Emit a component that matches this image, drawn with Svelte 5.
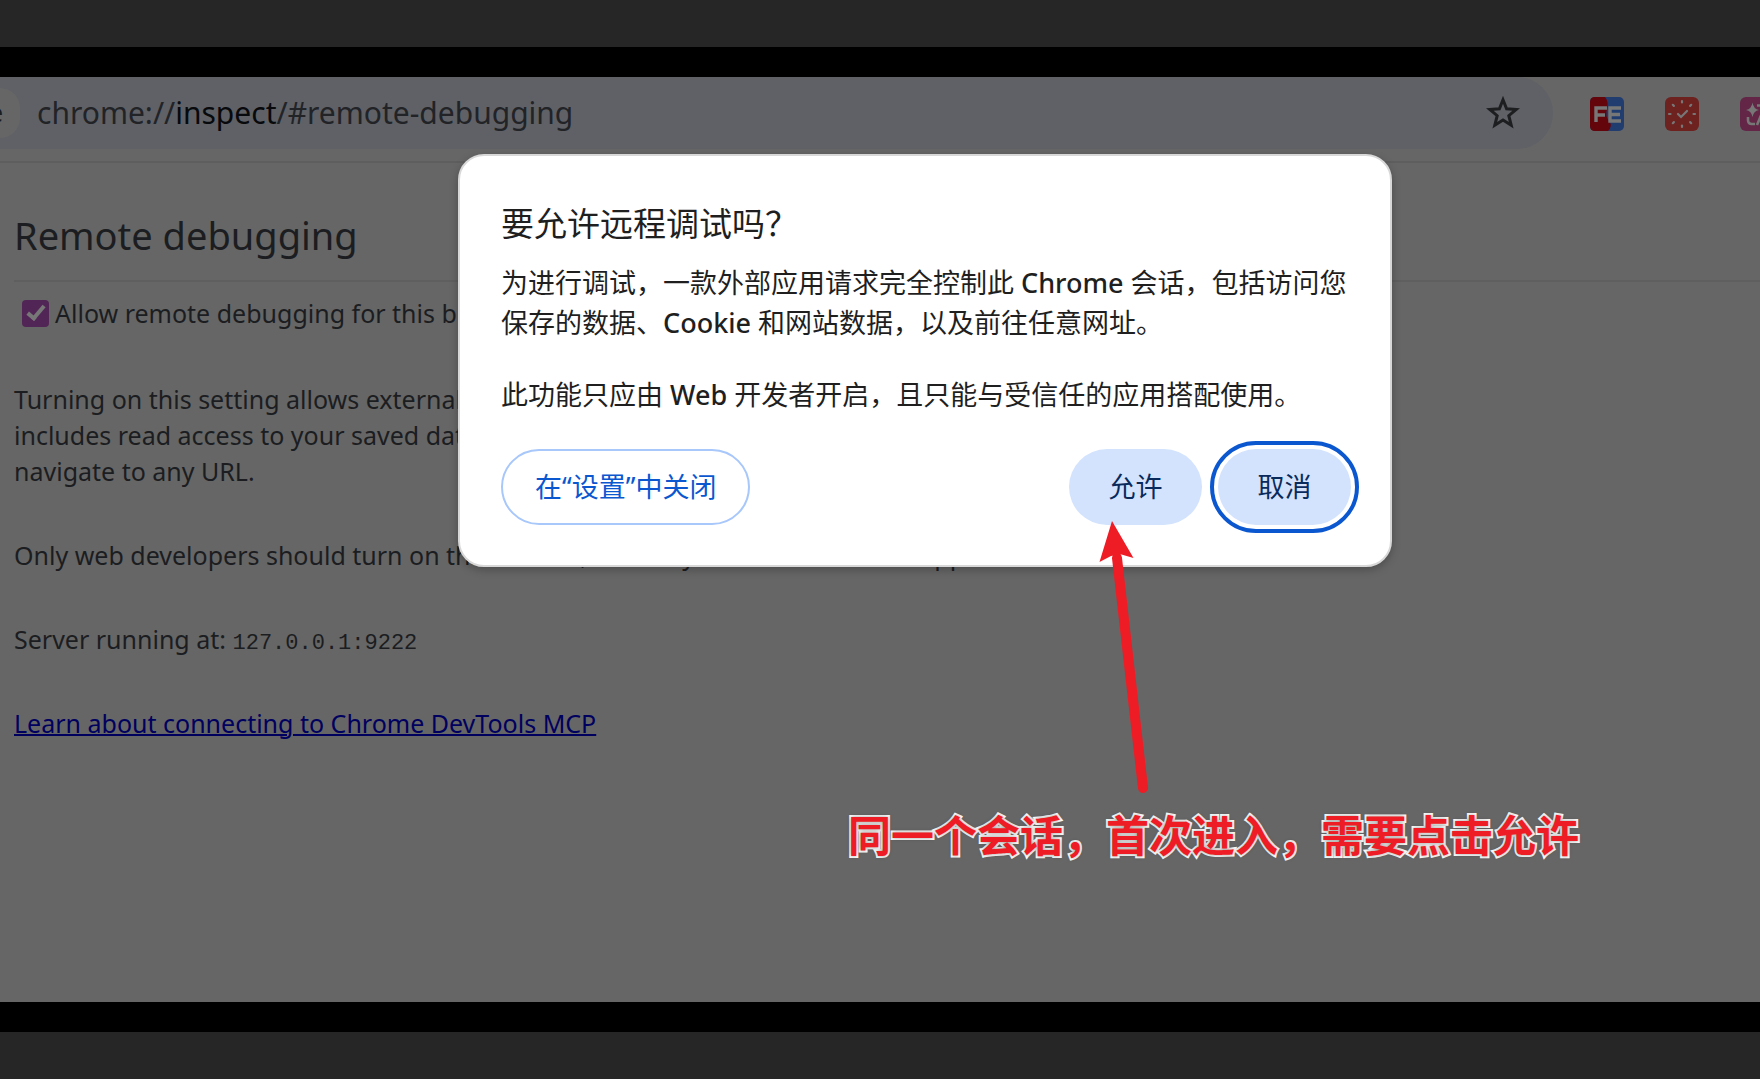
<script>
  let allowDebugging = $state(true);
  const ticks = [0, 45, 90, 135, 180, 225, 270, 315];
</script>

<main class="viewer">
  <section class="window">
    <header class="toolbar">
      <div class="omnibox">
        <span class="chip">e</span>
        <span class="url">chrome://<b>inspect</b>/#remote-debugging</span>
        <button class="icon-button" aria-label="Bookmark this tab">
          <svg class="star" viewBox="0 0 34 34">
            <path d="M17 3.8 20.6 12.8 30.2 13.5 22.8 19.7 25.2 29.2 17 24 8.8 29.2 11.2 19.7 3.8 13.5 13.4 12.8Z" />
          </svg>
        </button>
      </div>
      <nav class="extensions" aria-label="Extensions">
        <button class="icon-button" aria-label="FE helper">
          <svg viewBox="0 0 34 34">
            <rect width="34" height="34" rx="5" fill="#213d70" />
            <path d="M5 0H15Q19 5 17 12T19 24 18 34H5Q0 34 0 29V5Q0 0 5 0Z" fill="#64050c" />
            <path d="M6 25V11H17M6 18H15M31 11H20V24H31M20 17.500H30" fill="none" stroke="#777" stroke-width="3.400" />
          </svg>
        </button>
        <button class="icon-button" aria-label="Clock">
          <svg viewBox="0 0 34 34">
            <rect width="34" height="34" rx="6" fill="#6d2220" />
            <g stroke="#777" stroke-width="2.200" stroke-linecap="round" fill="none">
              {#each ticks as angle}
                <path d="M17 4V5.500" transform="rotate({angle} 17 17)" />
              {/each}
              <path d="M13 17 16 20 22 14" />
            </g>
          </svg>
        </button>
        <button class="icon-button" aria-label="Translate">
          <svg viewBox="0 0 34 34">
            <rect width="34" height="34" rx="6" fill="#632646" />
            <path d="M12.500 5.500Q13.500 12 19 13 13.500 14 12.500 20 11.500 14 6 13 11.500 12 12.500 5.500Z" fill="#777" />
            <path d="M17 8.500H26M8 20V23Q8 27 12 27H15M17 28 22 16 27 28" fill="none" stroke="#777" stroke-width="2.600" />
          </svg>
        </button>
      </nav>
    </header>

    <article class="page">
      <h1>Remote debugging</h1>
      <label class="option">
        <input type="checkbox" bind:checked={allowDebugging} />
        <span>Allow remote debugging for this browser instance</span>
      </label>
      <p>
        Turning on this setting allows external apps to request full control of the browser, which<br />
        includes read access to your saved data, cookies and site data, and the ability to<br />
        navigate to any URL.
      </p>
      <p>Only web developers should turn on this feature, and only use it with trusted apps</p>
      <p>Server running at: <code>127.0.0.1:9222</code></p>
      <p><a href="#mcp">Learn about connecting to Chrome DevTools MCP</a></p>
    </article>

    <div class="dialog" role="dialog" aria-labelledby="dialog-title">
      <h2 id="dialog-title">要允许远程调试吗？</h2>
      <p>为进行调试，一款外部应用请求完全控制此 <span>Chrome</span> 会话，包括访问您保存的数据、<span>Cookie</span> 和网站数据，以及前往任意网址。</p>
      <p>此功能只应由 <span>Web</span> 开发者开启，且只能与受信任的应用搭配使用。</p>
      <div class="actions">
        <button class="pill outline">在“设置”中关闭</button>
        <button class="pill tonal">允许</button>
        <button class="pill tonal focused">取消</button>
      </div>
    </div>

    <svg class="arrow" viewBox="0 0 48 280" aria-hidden="true">
      <path d="M17 37 43 267" stroke="#ee1c25" stroke-width="10" stroke-linecap="round" />
      <path d="M12 0 33.500 37 21.500 33.500 11 35 -0.500 41Z" fill="#ee1c25" />
    </svg>
    <div class="caption">同一个会话，首次进入，需要点击允许</div>
  </section>
</main>

<style>
  :global(body) {
    margin: 0;
    background: #262626;
  }
  .viewer {
    box-sizing: border-box;
    min-height: 100vh;
    padding: 47px 0;
    display: flex;
    flex-direction: column;
    font-family: "Noto Sans", "Noto Sans CJK SC", sans-serif;
    font-size: 25px;
    line-height: 36px;
    color: #1b1d21;
  }
  .window {
    position: relative;
    flex: 1;
    border: solid #000;
    border-width: 30px 0;
    background: #666;
    overflow: hidden;
  }
  .toolbar {
    display: flex;
    align-items: flex-start;
    height: 84px;
    border-bottom: 2px solid #5e5e5e;
    overflow: hidden;
  }
  .omnibox {
    flex: 1;
    height: 72px;
    box-sizing: border-box;
    display: flex;
    align-items: center;
    padding-right: 33px;
    border-radius: 0 36px 36px 0;
    background: #5f6166;
  }
  .chip {
    width: 20px;
    height: 50px;
    box-sizing: border-box;
    border-radius: 0 25px 25px 0;
    background: #666;
    line-height: 48px;
    text-indent: -11px;
    overflow: hidden;
  }
  .url {
    flex: 1;
    padding-left: 17px;
    font-size: 30px;
    color: #222327;
  }
  .url b {
    font-weight: 400;
    color: #08090c;
  }
  .icon-button {
    flex: none;
    width: 34px;
    height: 34px;
    padding: 0;
    border: 0;
    background: none;
  }
  .icon-button svg {
    display: block;
  }
  .star path {
    fill: none;
    stroke: #1d1e20;
    stroke-width: 3px;
  }
  .extensions {
    display: flex;
    gap: 41px;
    padding: 20px 0 0 37px;
    margin-right: -14px;
  }
  .page {
    padding: 46px 0 0 14px;
  }
  h1 {
    margin: 0 0 13px;
    padding-bottom: 19px;
    border-bottom: 2px solid #5f5f5f;
    font-size: 38px;
    line-height: 52px;
    font-weight: 400;
  }
  .option {
    display: flex;
    align-items: center;
    gap: 6px;
    padding-left: 8px;
  }
  input {
    appearance: none;
    width: 27px;
    height: 27px;
    margin: 0;
    display: grid;
    place-items: center;
    border-radius: 4px;
    background: #522557;
  }
  input:checked::before {
    content: "";
    width: 6px;
    height: 14px;
    margin-bottom: 4px;
    border: solid #777;
    border-width: 0 4px 4px 0;
    transform: rotate(40deg);
  }
  .option + p {
    margin-top: 50px;
  }
  .page p {
    margin-bottom: 48px;
  }
  code {
    font-family: "Liberation Mono", monospace;
    font-size: 22px;
    line-height: 1;
  }
  a {
    color: #00005f;
    text-decoration-thickness: 2px;
  }
  .dialog {
    position: absolute;
    top: 77px;
    left: 458px;
    width: 934px;
    box-sizing: border-box;
    padding: 46px 39px 40px 41px;
    border: 2px solid #d8d8d8;
    border-radius: 26px;
    background: #fff;
    box-shadow: 0 3px 8px #00000040;
    color: #1f1f1f;
    font-size: 27px;
    line-height: 40px;
  }
  h2 {
    margin: 0 0 17px;
    font-size: 33px;
    line-height: 44px;
    font-weight: 400;
  }
  .dialog p {
    margin: 0 0 32px;
  }
  .dialog p span {
    font-weight: 500;
  }
  .actions {
    display: flex;
    gap: 16px;
    margin-top: 34px;
  }
  .pill {
    height: 76px;
    min-width: 133px;
    padding: 0 32px;
    border: 0;
    border-radius: 38px;
    font: inherit;
    color: #0a2a5c;
  }
  .outline {
    margin-right: auto;
    border: 2px solid #a8c7fa;
    background: #fff;
    color: #0b57d0;
  }
  .tonal {
    background: #d3e3fd;
  }
  .focused {
    outline: 4px solid #0b57d0;
    outline-offset: 4px;
  }
  .arrow {
    position: absolute;
    top: 444px;
    left: 1100px;
    width: 48px;
    height: 280px;
    overflow: visible;
  }
  .caption {
    position: absolute;
    top: 729px;
    left: 848px;
    font-size: 43px;
    line-height: 60px;
    font-weight: 700;
    color: #ee1c25;
    -webkit-text-stroke: 4px #fff;
    paint-order: stroke fill;
    white-space: nowrap;
    text-shadow: 0 0 4px #0006;
  }
</style>
